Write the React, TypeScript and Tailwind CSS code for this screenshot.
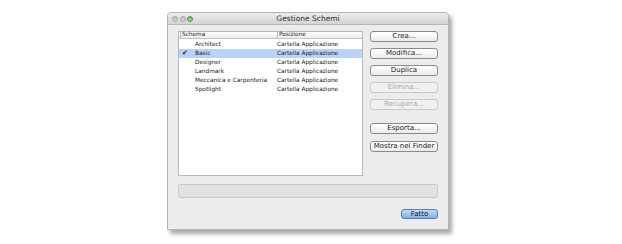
import React from 'react';

const rows = [
  { name: 'Architect', pos: 'Cartella Applicazione' },
  { name: 'Basic', pos: 'Cartella Applicazione', selected: true },
  { name: 'Designer', pos: 'Cartella Applicazione' },
  { name: 'Landmark', pos: 'Cartella Applicazione' },
  { name: 'Meccanica e Carpenteria', pos: 'Cartella Applicazione' },
  { name: 'Spotlight', pos: 'Cartella Applicazione' },
];

function Btn({ label, disabled }: { label: string; disabled?: boolean }) {
  return (
    <div
      className={`h-[11px] w-[68px] rounded-[3px] border flex items-center justify-center text-[7px] leading-none ${
        disabled
          ? 'border-[#c8c8c8] bg-[#f0f0f0] text-[#a8a8a8]'
          : 'border-[#8a8a8a] bg-gradient-to-b from-white to-[#ebebeb] text-[#1a1a1a]'
      }`}
    >
      {label}
    </div>
  );
}

function Light() {
  return <div className="w-[6px] h-[6px] rounded-full bg-gradient-to-b from-[#bdbdbd] to-[#d8d8d8] border border-[#a5a5a5]" />;
}

export default function App() {
  return (
    <div className="w-[622px] h-[244px] bg-white font-['DejaVu_Sans',sans-serif] overflow-hidden">
      <div className="ml-[167px] pt-[12px]">
        <div className="w-[282px] h-[218px] bg-[#ececec] border border-[#b4b4b4] rounded-t-[4px] shadow-[3px_4px_4px_rgba(0,0,0,0.35)] flex flex-col">
          {/* title bar */}
          <div className="h-[12px] rounded-t-[4px] bg-gradient-to-b from-[#ececec] to-[#d4d4d4] border-b border-[#b5b5b5] flex items-center relative">
            <div className="flex gap-[1.5px] ml-[4px]">
              <Light />
              <Light />
              <div className="w-[6px] h-[6px] rounded-full bg-gradient-to-b from-[#5fbf4a] to-[#9ee28a] border border-[#4e9a3f]" />
            </div>
            <div className="absolute inset-0 flex items-center justify-center text-[7.5px] text-[#2a2a2a]">
              Gestione Schemi
            </div>
          </div>

          <div className="flex-1 pl-[10px] pr-[10px] pt-[6px] flex flex-col">
            <div className="flex gap-[7px]">
              {/* table */}
              <div className="w-[186px] h-[145px] bg-white border border-[#b8b8b8]">
                <div className="h-[7px] flex items-center text-[5.8px] text-[#1a1a1a] border-b border-[#c4c4c4] bg-gradient-to-b from-white to-[#ececec] leading-none">
                  <div className="w-[97px] pl-[1px] border-l border-[#b8b8b8] ml-[1px]">Schema</div>
                  <div className="pl-[1px] border-l border-[#b8b8b8]">Posizione</div>
                </div>
                <div className="pt-[1px]">
                  {rows.map((r) => (
                    <div
                      key={r.name}
                      className={`h-[9px] flex items-center text-[5.8px] leading-none text-[#1a1a1a] ${
                        r.selected ? 'bg-[#b8d3f6]' : ''
                      }`}
                    >
                      <div className="w-[16px] pl-[3px] text-[7px]">{r.selected ? '✔' : ''}</div>
                      <div className="w-[82px]">{r.name}</div>
                      <div>{r.pos}</div>
                    </div>
                  ))}
                </div>
              </div>
              {/* buttons */}
              <div className="flex flex-col">
                <div className="flex flex-col gap-[6px]">
                  <Btn label="Crea..." />
                  <Btn label="Modifica..." />
                  <Btn label="Duplica" />
                  <Btn label="Elimina..." disabled />
                  <Btn label="Recupera..." disabled />
                </div>
                <div className="flex flex-col gap-[7px] mt-[13px]">
                  <Btn label="Esporta..." />
                  <Btn label="Mostra nel Finder" />
                </div>
              </div>
            </div>
            <div className="mt-[8px] h-[14px] w-[260px] bg-[#e2e2e2] border border-[#c9c9c9] rounded-[2px]" />
            <div className="flex justify-end mt-[11px]">
              <div className="h-[10px] w-[37px] rounded-[3px] border border-[#5a7fb8] bg-gradient-to-b from-[#c6dcf6] to-[#7eaee6] text-[7px] leading-none flex items-center justify-center text-[#111]">
                Fatto
              </div>
            </div>
          </div>
        </div>
      </div>
    </div>
  );
}
